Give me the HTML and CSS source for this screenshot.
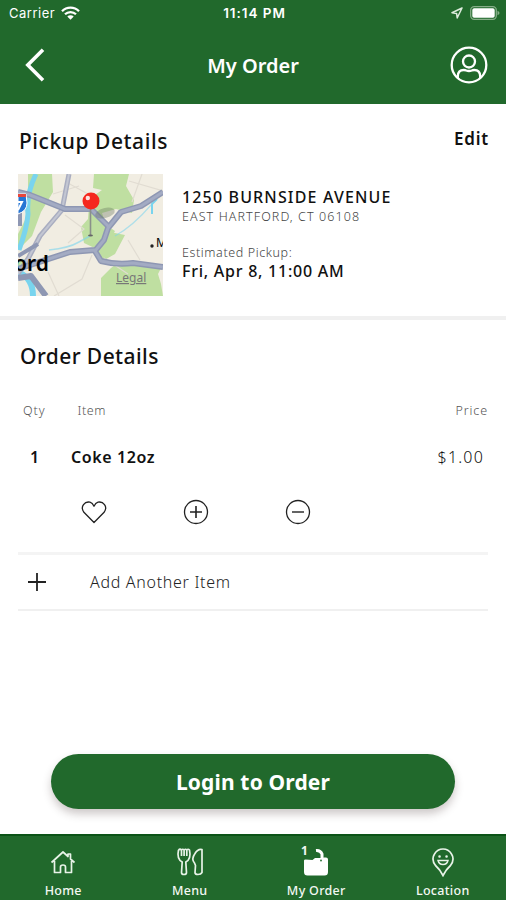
FILE: index.html
```html
<!DOCTYPE html>
<html lang="en">
<head>
<meta charset="utf-8">
<meta name="viewport" content="width=device-width, initial-scale=1">
<title>My Order</title>
<link rel="stylesheet" href="styles.css">
</head>
<body>
<div class="app">
  <header class="top">
    <div class="status">
      <div class="status-left">
        <span class="carrier">Carrier</span>
        <svg width="19" height="14" viewBox="0 0 19 14" fill="none" stroke="#fff" stroke-width="2.3"><path d="M1 5.2a12 12 0 0 1 17 0M4 8.3a7.8 7.8 0 0 1 11 0"/><path d="M6.3 10.6a4.5 4.5 0 0 1 6.4 0L9.500 13.800z" fill="#fff" stroke="none"/></svg>
      </div>
      <span class="clock">11:14 PM</span>
      <div class="status-right">
        <svg width="12" height="12" viewBox="0 0 12 12" fill="none" stroke="#dcebdc" stroke-width="1.500" stroke-linejoin="round"><path d="M11 1 1 5.800l4.600.600L6.200 11z"/></svg>
        <svg width="30" height="14" viewBox="0 0 30 14"><rect x=".7" y=".7" width="25.600" height="12.600" rx="3.500" fill="none" stroke="#86ae88" stroke-width="1.300"/><rect x="2.300" y="2.300" width="22.400" height="9.400" rx="1.800" fill="#fff"/><path d="M27.500 4.700q2 .8 2 2.300t-2 2.300z" fill="#86ae88"/></svg>
      </div>
    </div>
    <div class="nav">
      <svg width="20" height="34" viewBox="0 0 20 34" fill="none" stroke="#fff" stroke-width="3.600"><path d="M18 1.800 2.800 17 18 32.200"/></svg>
      <h1 class="nav-title">My Order</h1>
      <svg width="38" height="38" viewBox="0 0 38 38" fill="none" stroke="#fff" stroke-width="2.300"><circle cx="19" cy="19" r="17.300"/><circle cx="19" cy="15.500" r="6"/><path d="M7.800 32v-1.500q0-6.500 6-6.500 1.500 0 2.400.5 2.800 1 5.600 0 .9-.5 2.400-.5 6 0 6 6.500V32"/></svg>
    </div>
  </header>

  <section class="pickup">
    <div class="pickup-head">
      <h2 class="heading">Pickup Details</h2>
      <span class="edit">Edit</span>
    </div>
    <div class="pickup-body">
      <svg class="map" width="145" height="122" viewBox="0 0 145 122">
        <rect width="145" height="122" fill="#f1ede2"/>
        <g fill="#bfdfa1">
          <path d="M10 0h24l1 18-12 20-9 24-14 14V60L10 40z"/>
          <path d="M76 0h35l-3 12 8 14-2 13-16-4-14 4 4 12 9 6-6 11q2 10-8 9l-17-8-3-16 7-8 1-14-2-10h8l7-5-9-2z"/>
          <path d="M92 58l15 3-10 19-14 8-4-12zM83 122v-18l10-10 8-6 24 2h20l-5 10 3 10 2 12zM0 88l9-4-6 18-3 2z"/>
        </g>
        <g fill="none" stroke="#e1dcd2" stroke-width="1.200"><path d="M35 20l26-8M48 8l22 12M47 41l19 14-16 14M30 98l11 24M74 81l-10 24-28 17M86 84l24 16M110 66l12 20M111 7l34 10M124 0l-10 28"/></g>
        <g fill="none" stroke="#79d4ee"><path d="M18 0q-10 20-8 40Q9 54 1 76" stroke-width="5"/><path d="M0 98q15 6 15 24" stroke-width="6"/><path d="M31 76q20-2 30-8l11-6" stroke-width="1.500" stroke-opacity=".6"/><path d="M97 62q18-10 36-31" stroke-width="1.200" stroke-opacity=".55"/><path d="M134 40v-10l5-5" stroke-width="2"/></g>
        <path d="M51 0l-7 36-22 26-11 21L0 100" fill="none" stroke="#a9adc0" stroke-width="5"/>
        <path d="M51 0l-7 36-22 26-11 21L0 100" fill="none" stroke="#c3c6d2" stroke-width="2"/>
        <g fill="none" stroke="#8e97b3" stroke-width="6" stroke-linejoin="round"><path d="M0 18l12 3 35 14h26l17 17M145 18l-22 14-20 6-13 16-4 12-9 11 6 10q15 4 32 2l30 4M77 76L52 78 0 95M0 104l13-2 15 20"/><path d="M0 82l20-12M2 30v22" stroke-width="4"/></g>
        <g fill="none" stroke="#a3abc3" stroke-width="3" stroke-linejoin="round"><path d="M0 18l12 3 35 14h26l17 17M145 18l-22 14-20 6-13 16-4 12-9 11 6 10q15 4 32 2l30 4M77 76L52 78 0 95"/></g>
        <path d="M0 20h8l1 9q0 8-9 11z" fill="#2575d4" stroke="#fff" stroke-width="1"/><path d="M0 20h8v3H0z" fill="#e8463c"/><path d="M0 28h4l-4 8" fill="none" stroke="#fff" stroke-width="2"/>
        <ellipse cx="87" cy="39" rx="10" ry="5" fill="#60705a" opacity=".35" transform="rotate(-15 87 39)"/>
        <path d="M72.500 34v27" stroke="#8a908a" stroke-width="1.600"/><ellipse cx="72.500" cy="61.500" rx="2.500" ry="1" fill="#666"/>
        <circle cx="73" cy="27" r="8.500" fill="#f5281e"/><circle cx="69.800" cy="24" r="2.200" fill="#fff" opacity=".85"/>
        <text class="map-city" x="-4" y="97">ord</text>
        <circle cx="134" cy="72" r="1.700" fill="#222"/>
        <text class="map-town" x="138" y="73">M</text>
        <text class="map-legal" x="98" y="108">Legal</text>
      </svg>
      <div class="address">
        <p class="strong street">1250 BURNSIDE AVENUE</p>
        <p class="minor city">EAST HARTFORD, CT 06108</p>
        <p class="minor est">Estimated Pickup:</p>
        <p class="strong time">Fri, Apr 8, 11:00 AM</p>
      </div>
    </div>
  </section>

  <main class="order">
    <h2 class="heading order-heading">Order Details</h2>
    <div class="row labels"><span class="qty">Qty</span><span class="label-item">Item</span><span class="label-price">Price</span></div>
    <div class="row item"><span class="count">1</span><span class="name">Coke 12oz</span><span class="price">$1.00</span></div>
    <div class="actions">
      <svg width="26" height="26" viewBox="0 0 26 26" fill="none" stroke="#222" stroke-width="1.300" stroke-linejoin="round"><path d="M13 23.500 2.900 13.300C-1.300 7.500 4 2 9 3.200q2.500.6 4 4 1.500-3.400 4-4c5-1.200 10.300 4.300 6.100 10.100z"/></svg>
      <svg width="26" height="26" viewBox="0 0 26 26" fill="none" stroke="#222" stroke-width="1.300"><circle cx="13" cy="13" r="11.500"/><path d="M7 13h12M13 7v12" stroke-width="1.600"/></svg>
      <svg width="26" height="26" viewBox="0 0 26 26" fill="none" stroke="#222" stroke-width="1.300"><circle cx="13" cy="13" r="11.500"/><path d="M7 13h12" stroke-width="1.400"/></svg>
    </div>
    <div class="add">
      <svg width="20" height="20" viewBox="0 0 20 20" fill="none" stroke="#222" stroke-width="1.800"><path d="M1 10h18M10 1v18"/></svg>
      <span class="add-label">Add Another Item</span>
    </div>
  </main>

  <div class="cta"><button class="login"><span>Login to Order</span></button></div>

  <nav class="tabs">
    <div class="tab">
      <svg width="30" height="30" viewBox="0 0 30 30" fill="none" stroke="#e8f3e8" stroke-width="1.700" stroke-linejoin="round"><path d="M3.500 15.500 15 5l5 4.500V7h2.500v5l4 3.500M6.500 14v11.500h6V20q0-2 2.500-2t2.500 2v5.500h6V14"/></svg>
      <span class="label">Home</span>
    </div>
    <div class="tab">
      <svg width="30" height="30" viewBox="0 0 30 30" fill="none" stroke="#e8f3e8" stroke-width="1.700" stroke-linejoin="round"><path d="M3.500 3q-2 9 3.700 12l-.7 10.500q0 2 2.500 2t2.500-2L10.800 15Q16.500 12 14.500 3q-1.500-1.500-2.700 0v6M6.500 9V3Q5 1.500 3.500 3M6.500 3q1.200-1.500 2.600 0v6M9.100 3q1.400-1.500 2.700 0M27 2.500q-4-1-7 4-4 5.500-.5 9.500l1 2.500-.5 7q0 2 3 2t4-2z"/></svg>
      <span class="label">Menu</span>
    </div>
    <div class="tab bag-tab">
      <svg width="30" height="30" viewBox="0 0 30 30"><path d="M3 13.500q0-1 1.500-1l7 .5 2.500-2h6l3-.5h2q2 0 2 2V25q0 3.500-3.500 3.500h-17Q3 28.500 3 25z" fill="#fff"/><path d="M15 3.500q4.500-.5 6 3.500v5" fill="none" stroke="#fff" stroke-width="3"/><circle cx="20" cy="13.500" r=".9" fill="#216a2d"/></svg>
      <span class="badge">1</span>
      <span class="label">My Order</span>
    </div>
    <div class="tab">
      <svg width="30" height="30" viewBox="0 0 30 30" fill="none" stroke="#e8f3e8" stroke-width="1.700" stroke-linecap="round"><path d="M15 28.500Q12 22.500 7.500 18.500q-4.500-6-1-11.500Q9.500 2 15 2t8.500 5q3.500 5.500-1 11.500Q18 22.500 15 28.500z"/><path d="M10 13.500q1 4 5 4t5-4z" stroke-width="1.400"/><path d="M11.500 9.500h.1M18.500 9.500h.1" stroke-width="2.500"/></svg>
      <span class="label">Location</span>
    </div>
  </nav>
</div>
</body>
</html>
```
FILE: styles.css
```css
* { box-sizing: border-box; }
body, h1, h2, p { margin: 0; }
body { font-family: "Noto Sans", sans-serif; color: #111; background: #fff; }
svg { display: block; flex: none; }
.app { width: 506px; height: 900px; display: flex; flex-direction: column; overflow: hidden; white-space: nowrap; }
.top { height: 104px; background: #21692c; color: #fff; flex: none; }
.status { height: 26px; display: grid; grid-template-columns: 1fr auto 1fr; align-items: center; padding: 0 6px 0 9px; font: 13px/26px Inter, sans-serif; }
.status-left, .status-right { display: flex; align-items: center; gap: 6px; }
.status-right { justify-content: flex-end; gap: 7px; }
.carrier { letter-spacing: .5px; }
.clock { font-weight: 600; font-size: 13.500px; letter-spacing: .95px; }
.nav { height: 78px; display: flex; align-items: center; justify-content: space-between; padding: 0 18px 0 25px; }
.nav-title { font-size: 20px; font-weight: 600; line-height: 30px; margin: 2px 0 0 11px; }
.pickup { height: 216px; border-bottom: 4px solid #f0f0f0; padding: 22px 18px 0; flex: none; }
.pickup-head { display: flex; justify-content: space-between; height: 48px; }
.heading { font-size: 21px; font-weight: 500; line-height: 30px; padding-left: 1px; letter-spacing: .55px; }
.edit { font-size: 17px; font-weight: 600; line-height: 26px; letter-spacing: .8px; margin-right: -1px; }
.pickup-body { display: flex; gap: 19px; }
.map-city { font-size: 21px; font-weight: 600; }
.map-town { font-size: 12px; }
.map-legal { font-size: 12px; fill: #777; text-decoration: underline; }
.address { padding-top: 13px; }
.strong { font-size: 16px; font-weight: 500; line-height: 21px; }
.street { letter-spacing: 1.150px; }
.time { letter-spacing: .75px; }
.minor { font-size: 12.500px; line-height: 17px; color: #444; font-weight: 300; }
.city { letter-spacing: 1.080px; }
.est { margin-top: 19px; letter-spacing: .6px; }
.order { padding: 0 18px; height: 434px; flex: none; }
.order-heading { padding: 21px 0 0 2px; height: 78px; letter-spacing: .42px; }
.row { display: flex; align-items: center; }
.labels { height: 24px; font-size: 12.500px; color: #555; font-weight: 300; padding-left: 5px; letter-spacing: .9px; }
.label-item { margin-left: 32px; letter-spacing: .6px; }
.label-price { margin-left: auto; }
.item { height: 70px; font-size: 16px; padding: 0 4px 0 12px; }
.count { font-weight: 600; width: 41px; }
.name { font-weight: 600; letter-spacing: .6px; }
.price { margin-left: auto; font-weight: 300; letter-spacing: 1.200px; }
.actions { height: 60px; display: flex; gap: 76px; padding: 7px 0 0 63px; }
.add { height: 59px; display: flex; align-items: center; gap: 43px; padding-left: 9px; border-top: 3px solid #f4f4f4; border-bottom: 2px solid #f0f0f0; }
.add-label { font-size: 16px; font-weight: 300; color: #222; letter-spacing: .7px; }
.cta { height: 80px; display: flex; justify-content: center; }
.login { width: 404px; height: 55px; border: 0; border-radius: 28px; background: #21692c; color: #fff; font: 700 21px "Noto Sans", sans-serif; letter-spacing: .15px; box-shadow: 0 5px 8px rgba(60,40,40,.25); }
.tabs { height: 66px; background: #21692c; border-top: 2px solid #0b5317; color: #f3f8f3; display: flex; flex: none; }
.tab { flex: 1; display: flex; flex-direction: column; align-items: center; padding-top: 11px; font-size: 12.500px; line-height: 20px; position: relative; font-weight: 500; }
.label { margin-top: 4px; letter-spacing: .3px; }
.badge { position: absolute; left: 48px; top: 5px; font-size: 12px; font-weight: 700; }
```
